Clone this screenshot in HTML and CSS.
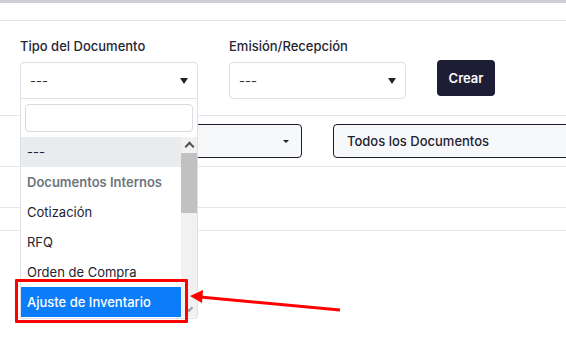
FILE: index.html
```html
<!DOCTYPE html>
<html lang="es">
<head>
  <meta charset="UTF-8">
  <meta name="viewport" content="width=device-width, initial-scale=1.0">
  <title>Documentos</title>
  <link rel="stylesheet" href="styles.css">
</head>
<body>
  <div class="topbar"></div>
  <div class="header-space"></div>

  <div class="form-row">
    <div class="field field-tipo">
      <label>Tipo del Documento</label>
      <div class="select">
        <span>---</span>
        <i class="caret"></i>
      </div>
    </div>

    <div class="field field-emision">
      <label>Emisión/Recepción</label>
      <div class="select">
        <span>---</span>
        <i class="caret"></i>
      </div>
    </div>

    <button class="btn-crear">Crear</button>
  </div>

  <div class="filter-row">
    <div class="filter-select filter-first">
      <i class="caret small"></i>
    </div>
    <div class="filter-select filter-docs">
      <span>Todos los Documentos</span>
    </div>
  </div>

  <div class="table-head"></div>

  <!-- open dropdown of "Tipo del Documento" -->
  <div class="dropdown">
    <div class="dropdown-search"><input type="text"></div>
    <div class="dropdown-body">
      <ul class="options">
        <li class="option hover">---</li>
        <li class="option group">Documentos Internos</li>
        <li class="option">Cotización</li>
        <li class="option">RFQ</li>
        <li class="option">Orden de Compra</li>
        <li class="option selected">Ajuste de Inventario</li>
      </ul>
      <div class="scrollbar">
        <div class="arrow-up"></div>
        <div class="thumb"></div>
        <div class="arrow-down"></div>
      </div>
    </div>
  </div>

  <!-- annotation -->
  <div class="highlight-box"></div>
  <svg class="annot-arrow" width="566" height="361" viewBox="0 0 566 361">
    <line x1="340" y1="310" x2="200" y2="297" stroke="#ff0000" stroke-width="3"/>
    <polygon points="190,296 203,290 202,303" fill="#ff0000"/>
  </svg>
</body>
</html>
```

FILE: styles.css
```css
body {
  margin: 0;
  padding: 0;
  font-family: 'Inter', 'Noto Sans', sans-serif;
  font-size: 13px;
  color: #23232f;
  background-color: #fff;
  width: 566px;
  height: 361px;
  overflow: hidden;
  position: relative;
}

.topbar {
  height: 3px;
  background-color: #cfd0d6;
}

.header-space {
  height: 17px;
  border-bottom: 1px solid #e5e5ef;
}

/* form */
.form-row {
  display: flex;
  gap: 31px;
  padding: 17px 20px 16px;
  border-bottom: 1px solid #e5e5ef;
}

.field label {
  display: block;
  height: 16px;
  line-height: 16px;
  margin-bottom: 8px;
  font-weight: 500;
  color: #262633;
}

.field-tipo {
  width: 178px;
}

.field-emision {
  width: 177px;
}

.select {
  box-sizing: border-box;
  height: 37px;
  border: 1px solid #dedfe7;
  border-radius: 4px;
  display: flex;
  align-items: center;
  justify-content: space-between;
  padding: 0 9px 0 9px;
  color: #333;
}

.field-tipo .select {
  border-bottom-left-radius: 0;
  border-bottom-right-radius: 0;
}

.caret {
  width: 0;
  height: 0;
  border-left: 4px solid transparent;
  border-right: 4px solid transparent;
  border-top: 6px solid #222;
}

.caret.small {
  border-left-width: 3px;
  border-right-width: 3px;
  border-top-width: 3px;
}

.btn-crear {
  align-self: flex-start;
  margin-top: 22px;
  width: 58px;
  height: 36px;
  border: none;
  border-radius: 4px;
  background-color: #1d1d35;
  color: #fff;
  font-family: 'Inter', sans-serif;
  font-size: 13px;
  font-weight: 600;
}

/* filters */
.filter-row {
  display: flex;
  gap: 31px;
  padding: 8px 0 8px 20px;
  border-bottom: 1px solid #e5e5ef;
  overflow: hidden;
}

.filter-select {
  box-sizing: border-box;
  height: 34px;
  flex-shrink: 0;
  border: 1.5px solid #1c1c30;
  border-radius: 4px;
  background-color: #f7f8fa;
  display: flex;
  align-items: center;
}

.filter-first {
  width: 282px;
  justify-content: flex-end;
  padding-right: 12px;
}

.filter-docs {
  width: 280px;
  padding-left: 13px;
  font-weight: 500;
  color: #1e2233;
}

.table-head {
  margin-top: 40px;
  height: 22px;
  border-top: 1px solid #e5e5ef;
  border-bottom: 1px solid #e5e5ef;
}

/* dropdown */
.dropdown {
  position: absolute;
  left: 20px;
  top: 99px;
  width: 178px;
  box-sizing: border-box;
  background-color: #fff;
  border: 1px solid #dfe0e7;
  border-top: none;
  border-radius: 0 0 4px 4px;
  padding-bottom: 1px;
}

.dropdown-search {
  padding: 5px 4px 5px 4px;
}

.dropdown-search input {
  display: block;
  box-sizing: border-box;
  width: 100%;
  height: 28px;
  margin: 0;
  border: 1px solid #dadbe3;
  border-radius: 4px;
  outline: none;
}

.dropdown-body {
  display: flex;
}

.options {
  list-style: none;
  margin: 0;
  padding: 0;
  flex: 1;
}

.option {
  height: 30px;
  line-height: 30px;
  padding-left: 6px;
  color: #23232f;
  white-space: nowrap;
}

.option.hover {
  background-color: #e9ecef;
}

.option.group {
  font-weight: 600;
  color: #6c757d;
}

.option.selected {
  background-color: #0b7dfb;
  color: #fff;
  font-weight: 500;
}

.scrollbar {
  width: 16px;
  background-color: #f1f1f1;
  display: flex;
  flex-direction: column;
}

.arrow-up {
  height: 16px;
  position: relative;
}

.arrow-up::before {
  content: "";
  position: absolute;
  left: 5px;
  top: 6px;
  width: 5px;
  height: 5px;
  border-left: 2px solid #505050;
  border-top: 2px solid #505050;
  transform: rotate(45deg);
}

.thumb {
  height: 60px;
  background-color: #c1c1c1;
}

.arrow-down {
  margin-top: auto;
  height: 14px;
  position: relative;
}

.arrow-down::before {
  content: "";
  position: absolute;
  left: 5px;
  top: 2px;
  width: 4px;
  height: 4px;
  border-right: 2px solid #a3a3a3;
  border-bottom: 2px solid #a3a3a3;
  transform: rotate(45deg);
}

/* annotation */
.highlight-box {
  position: absolute;
  left: 15px;
  top: 279px;
  width: 167px;
  height: 38px;
  border: 3px solid #ff0000;
  border-radius: 1px;
}

.annot-arrow {
  position: absolute;
  left: 0;
  top: 0;
  pointer-events: none;
}
```
